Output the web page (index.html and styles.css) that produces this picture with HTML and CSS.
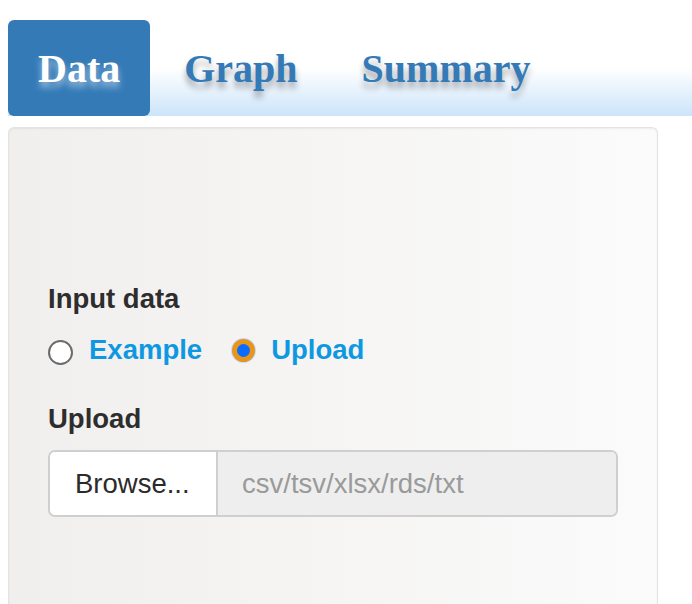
FILE: index.html
```html
<!DOCTYPE html>
<html lang="en">
<head>
<meta charset="utf-8">
<title>Data</title>
<link rel="stylesheet" href="styles.css">
</head>
<body>
<div class="page">
  <ul class="tabs">
    <li class="tab active">Data</li>
    <li class="tab">Graph</li>
    <li class="tab">Summary</li>
  </ul>
  <div class="well">
    <div class="field">
      <div class="label">Input data</div>
      <div class="radios">
        <label class="radio"><span class="dot"></span><span class="rtext">Example</span></label>
        <label class="radio"><span class="dot checked"></span><span class="rtext">Upload</span></label>
      </div>
    </div>
    <div class="field upload">
      <div class="label">Upload</div>
      <div class="file">
        <span class="browse">Browse...</span>
        <span class="placeholder">csv/tsv/xlsx/rds/txt</span>
      </div>
    </div>
  </div>
</div>
</body>
</html>
```

FILE: styles.css
```css
html, body {
  margin: 0;
  padding: 0;
  background: #fff;
}
.page {
  padding: 20px 0 0 8px;
  font-family: "Liberation Sans", Arial, sans-serif;
}
.tabs {
  list-style: none;
  margin: 0;
  padding: 0;
  display: flex;
  height: 96px;
  background: linear-gradient(to bottom, #ffffff 0%, #ffffff 50%, #cce4fa 100%);
}
.tab {
  padding: 2px 30px 0;
  margin-right: 4px;
  line-height: 94px;
  font-family: "Liberation Serif", "Times New Roman", serif;
  font-weight: bold;
  font-size: 40px;
  color: #337ab7;
  text-shadow: 0 6px 6px rgba(0, 0, 0, 0.32);
}
.tab.active {
  background: #337ab7;
  color: #fff;
  border-radius: 6px;
  text-shadow: 0 5px 7px rgba(255, 255, 255, 0.55);
}
.well {
  margin-top: 11px;
  width: 570px;
  height: 324px;
  padding: 152px 39px 0;
  border: 1px solid #e3e3e3;
  border-bottom: 0;
  border-radius: 6px 6px 0 0;
  background: linear-gradient(to right, #f1efee 0%, #f6f5f4 50%, #fbfbfb 100%);
  box-shadow: inset 0 1px 2px rgba(0, 0, 0, 0.06);
}
.label {
  font-size: 27.5px;
  line-height: 38px;
  font-weight: bold;
  color: #2d2d2d;
}
.radios {
  display: flex;
  margin-top: 13px;
  gap: 30px;
}
.radio {
  display: flex;
  align-items: center;
  gap: 16px;
  font-size: 27.5px;
  line-height: 38px;
  font-weight: bold;
  color: #0f98e2;
}
.dot {
  box-sizing: border-box;
  width: 25px;
  height: 25px;
  border-radius: 50%;
  border: 2px solid #6b6b6b;
  background: #fff;
  margin-top: 4px;
}
.dot.checked {
  width: 23px;
  height: 23px;
  border: 5px solid #e8951d;
  background: #0a6cff;
  margin-top: 0;
  box-shadow: 0 0 0 1px rgba(160, 200, 255, 0.6);
}
.upload {
  margin-top: 31px;
}
.file {
  display: flex;
  margin-top: 12px;
  height: 67px;
  box-sizing: border-box;
  border: 2px solid #cfcfcf;
  border-radius: 7px;
  overflow: hidden;
  font-size: 27.5px;
}
.browse {
  display: flex;
  align-items: center;
  padding: 0 25px;
  width: 116px;
  background: #fff;
  color: #2b2b2b;
  border-right: 2px solid #cfcfcf;
}
.placeholder {
  flex: 1;
  display: flex;
  align-items: center;
  padding-left: 24px;
  background: #eeeeee;
  color: #9a9a9a;
}
```
